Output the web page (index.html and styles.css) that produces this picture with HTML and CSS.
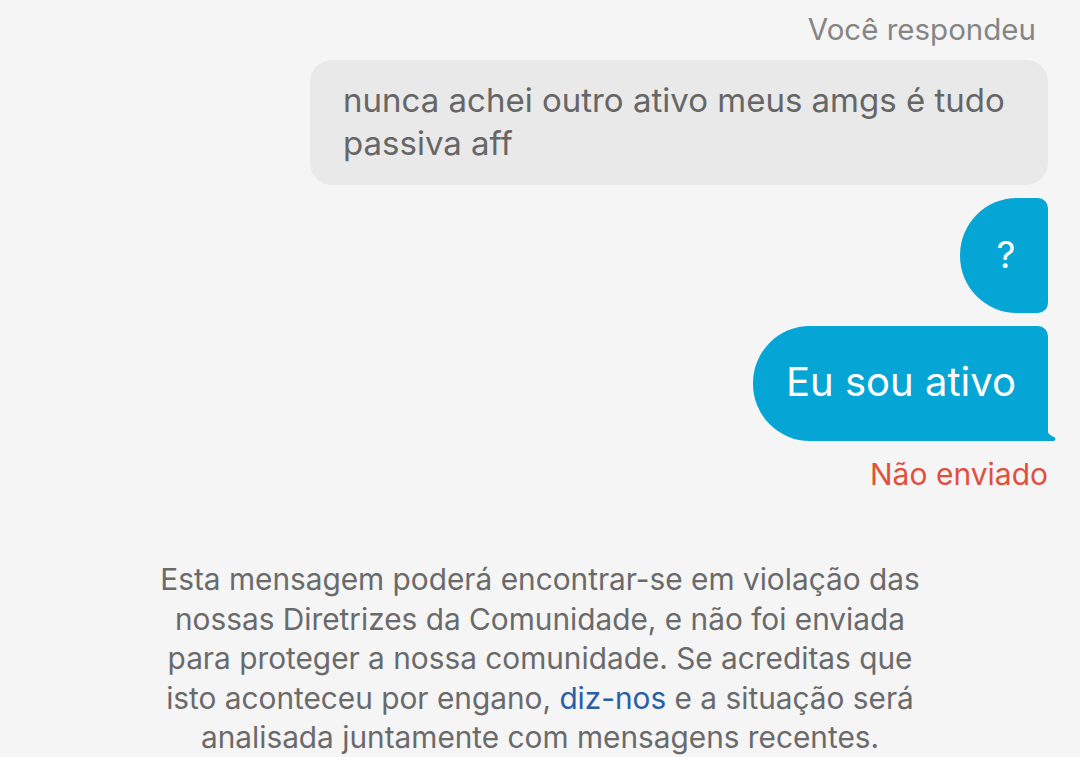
FILE: index.html
```html
<!DOCTYPE html>
<html lang="pt">
<head>
<meta charset="utf-8">
<link rel="stylesheet" href="styles.css">
</head>
<body>
<div class="chat">
  <div class="label">Você respondeu</div>
  <div class="row">
    <div class="bubble grey">nunca achei outro ativo meus amgs é tudo passiva aff</div>
  </div>
  <div class="row">
    <div class="bubble blue q">?</div>
  </div>
  <div class="row">
    <div class="bubble blue last">Eu sou ativo
      <svg class="tail" width="12" height="16" viewBox="0 0 12 16"><path d="M0 0 C1 6 4 10 9 12 C11 13 11 15 9 16 L0 16 Z" fill="#05a6d6"/></svg>
    </div>
  </div>
  <div class="status">Não enviado</div>
  <p class="notice">Esta mensagem poderá encontrar-se em violação das<br>nossas Diretrizes da Comunidade, e não foi enviada<br>para proteger a nossa comunidade. Se acreditas que<br>isto aconteceu por engano, <span class="link">diz-nos</span> e a situação será<br>analisada juntamente com mensagens recentes.</p>
</div>
</body>
</html>
```
FILE: styles.css
```css
html, body {
  margin: 0;
  padding: 0;
  background: #f5f5f5;
}
body {
  font-family: Inter, "Noto Sans", sans-serif;
  width: 1080px;
  height: 757px;
  overflow: hidden;
}
.chat {
  display: flex;
  flex-direction: column;
  padding: 11px 32px 0 0;
}
.label {
  align-self: flex-end;
  margin-right: 12px;
  font-size: 29.5px;
  line-height: 36px;
  color: #858585;
}
.row {
  display: flex;
  justify-content: flex-end;
}
.bubble {
  box-sizing: border-box;
}
.grey {
  margin-top: 13px;
  width: 738px;
  height: 125px;
  background: #e9e9e9;
  border-radius: 22px;
  padding: 19px 20px 0 33px;
  font-size: 33px;
  line-height: 43px;
  color: #666666;
}
.blue {
  position: relative;
  background: #05a6d6;
  color: #ffffff;
  height: 115px;
  display: flex;
  align-items: center;
  border-radius: 57px 10px 10px 57px;
}
.q {
  margin-top: 13px;
  width: 88px;
  justify-content: center;
  padding-left: 4px;
  padding-bottom: 2px;
  font-size: 37px;
}
.last {
  margin-top: 13px;
  width: 295px;
  padding-left: 33px;
  padding-bottom: 4px;
  font-size: 40px;
  border-radius: 57px 10px 0 57px;
}
.tail {
  position: absolute;
  right: -9px;
  bottom: 0;
}
.status {
  align-self: flex-end;
  margin-top: 15px;
  font-size: 30px;
  line-height: 36px;
  color: #e0503e;
}
.notice {
  margin: 68px 0 0 32px;
  align-self: center;
  text-align: center;
  font-size: 29.8px;
  line-height: 39.5px;
  color: #6a6a6a;
}
.link {
  color: #2a5ea8;
}
```
